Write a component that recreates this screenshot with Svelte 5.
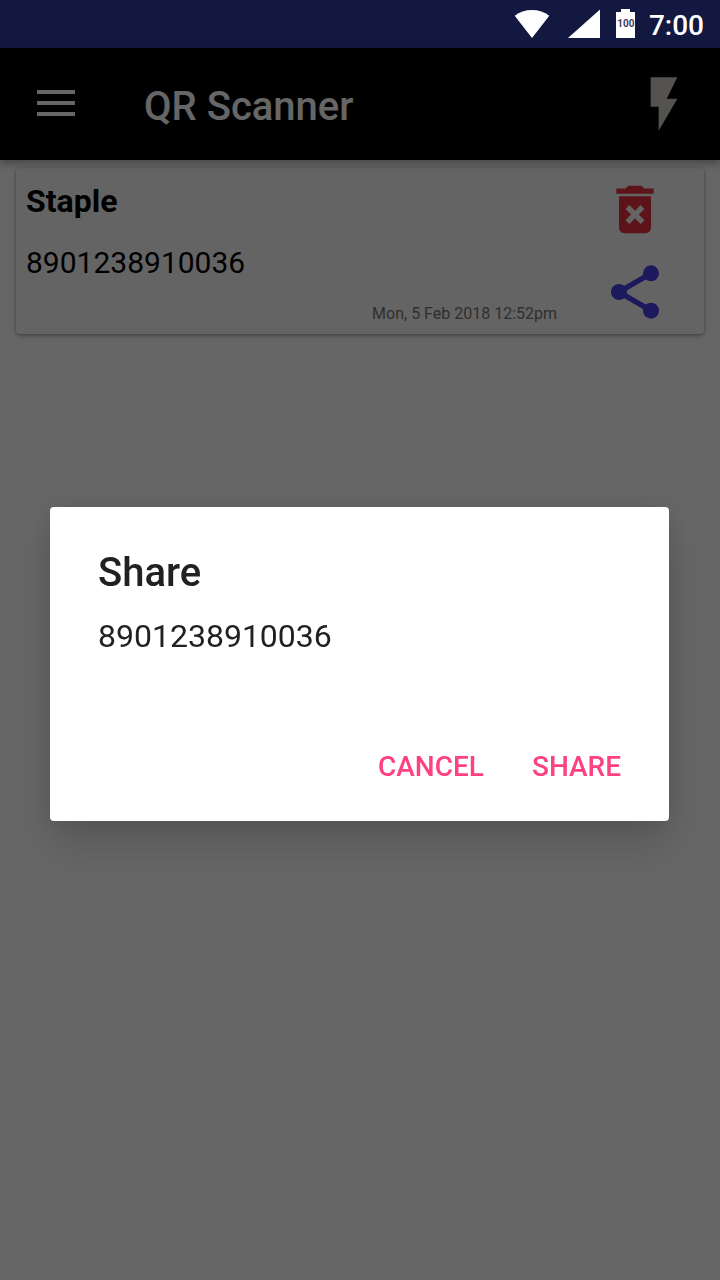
<script>
  let open = $state(true);
  const scan = {
    name: 'Staple',
    code: '8901238910036',
    date: 'Mon, 5 Feb 2018 12:52pm'
  };
</script>

<div class="app">
  <div class="status">
    <div class="indicators">
      <svg width="38" height="30" viewBox="0 0 38 30" aria-hidden="true">
        <path d="M.7 6.8Q8 .9 18 .9T35.3 6.8L18 29z" fill="#fff" />
      </svg>
      <svg width="32" height="30" viewBox="0 0 32 30" aria-hidden="true">
        <path d="M32 .5V29H0z" fill="#fff" />
      </svg>
      <span class="battery">100</span>
    </div>
    <time>7:00</time>
  </div>

  <header>
    <button class="icon menu" aria-label="Menu">
      <svg width="38" height="28" viewBox="0 0 38 28">
        <path d="M0 0h38v4H0zM0 11h38v4H0zM0 22h38v4H0z" fill="currentColor" />
      </svg>
    </button>
    <h1>QR Scanner</h1>
    <button class="icon flash" aria-label="Flash">
      <svg width="64" height="64" viewBox="0 0 24 24">
        <path d="M7 2v11h3v9l7-12h-4l4-8z" fill="currentColor" />
      </svg>
    </button>
  </header>

  <main>
    <article>
      <div class="details">
        <h2>{scan.name}</h2>
        <p class="code">{scan.code}</p>
        <p class="date">{scan.date}</p>
      </div>
      <div class="actions">
        <button class="icon delete" aria-label="Delete">
          <svg width="64" height="64" viewBox="0 0 24 24">
            <path
              fill="currentColor"
              d="M6 18.7c0 1.1.9 2 2 2h8c1.1 0 2-.9 2-2V6.8H6v11.9zm2.46-7.12l1.41-1.41L12 12.29l2.12-2.12 1.41 1.41L13.41 13.7l2.12 2.12-1.41 1.41L12 15.11l-2.12 2.12-1.41-1.41L10.59 13.7l-2.13-2.12zM15.5 3.9l-1-1h-5l-1 1H5v2h14v-2z"
            />
          </svg>
        </button>
        <button class="icon share" aria-label="Share" onclick={() => (open = true)}>
          <svg width="64" height="64" viewBox="0 0 24 24">
            <g fill="currentColor">
              <circle cx="18" cy="5" r="3" />
              <circle cx="6" cy="12" r="3" />
              <circle cx="18" cy="19" r="3" />
            </g>
            <path d="M18 5L6 12l12 7" fill="none" stroke="currentColor" stroke-width="2" />
          </svg>
        </button>
      </div>
    </article>
  </main>

  {#if open}
    <div class="scrim">
      <div class="dialog" role="dialog" aria-modal="true" aria-labelledby="dialog-title">
        <h2 id="dialog-title">Share</h2>
        <p>{scan.code}</p>
        <div class="buttons">
          <button onclick={() => (open = false)}>CANCEL</button>
          <button onclick={() => (open = false)}>SHARE</button>
        </div>
      </div>
    </div>
  {/if}
</div>

<style>
  :global(body) {
    margin: 0;
    background: #fff;
  }
  .app {
    min-height: 100vh;
    font-family: Roboto, sans-serif;
    color: #000;
  }
  h1,
  h2,
  p {
    margin: 0;
  }
  button {
    border: 0;
    padding: 0;
    background: none;
    font: inherit;
    cursor: pointer;
  }
  svg {
    display: block;
  }
  .icon {
    display: flex;
  }

  .status {
    display: flex;
    align-items: center;
    justify-content: flex-end;
    gap: 13px;
    height: 48px;
    padding-right: 16px;
    background: #131840;
    color: #fff;
  }
  .indicators {
    display: flex;
    align-items: center;
    gap: 16px;
  }
  .status time {
    padding-top: 4px;
    font-size: 28px;
    line-height: 44px;
    font-weight: 500;
  }
  .battery {
    box-sizing: border-box;
    width: 20px;
    height: 30px;
    padding-top: 3px;
    background:
      linear-gradient(#fff, #fff) 5px 0 / 9px 3px no-repeat,
      linear-gradient(#fff, #fff) 0 3px / 19px 26px no-repeat;
    color: #3a3e60;
    font-size: 10px;
    line-height: 24px;
    font-weight: 700;
    text-align: center;
  }

  header {
    position: relative;
    display: flex;
    align-items: center;
    height: 112px;
    padding: 0 24px 0 37px;
    box-sizing: border-box;
    background: #000;
    color: #fff;
    box-shadow: 0 4px 8px rgba(0, 0, 0, 0.3);
  }
  .menu {
    color: #fff;
  }
  h1 {
    flex: 1;
    padding: 6px 0 0 69px;
    font-size: 40px;
    line-height: 48px;
    font-weight: 500;
  }
  .flash {
    color: #d2cfc8;
  }

  main {
    padding: 8px 16px;
  }
  article {
    display: flex;
    gap: 46px;
    padding: 10px 37px 10px 10px;
    border-radius: 4px;
    background: #fafafa;
    box-shadow:
      0 0 3px rgba(0, 0, 0, 0.15),
      0 2px 4px rgba(0, 0, 0, 0.3);
  }
  .details {
    flex: 1;
    display: flex;
    flex-direction: column;
  }
  .details h2 {
    font-size: 32px;
    line-height: 46px;
    font-weight: 700;
  }
  .code {
    margin-top: 20px;
    font-size: 30px;
    line-height: 38px;
  }
  .date {
    margin-top: auto;
    color: #757575;
    font-size: 16px;
    line-height: 20px;
    text-align: right;
  }
  .actions {
    display: flex;
    flex-direction: column;
    gap: 18px;
  }
  .delete {
    color: #e63442;
  }
  .share {
    color: #4642e6;
  }

  .scrim {
    position: fixed;
    inset: 48px 0 0;
    display: flex;
    align-items: center;
    justify-content: center;
    padding: 0 51px 0 50px;
    background: rgba(0, 0, 0, 0.6);
  }
  .dialog {
    flex: 1;
    padding: 42px 32px 20px 48px;
    border-radius: 4px;
    background: #fff;
    color: #212121;
    box-shadow:
      0 24px 40px rgba(0, 0, 0, 0.15),
      0 0 28px rgba(0, 0, 0, 0.1);
  }
  .dialog h2 {
    font-size: 40px;
    line-height: 48px;
    font-weight: 500;
  }
  .dialog p {
    margin-top: 20px;
    font-size: 32px;
    line-height: 38px;
  }
  .buttons {
    display: flex;
    justify-content: flex-end;
    gap: 16px;
    margin-top: 76px;
  }
  .buttons button {
    height: 70px;
    padding: 0 16px;
    color: #ff4081;
    font-size: 28px;
    font-weight: 500;
  }
</style>
